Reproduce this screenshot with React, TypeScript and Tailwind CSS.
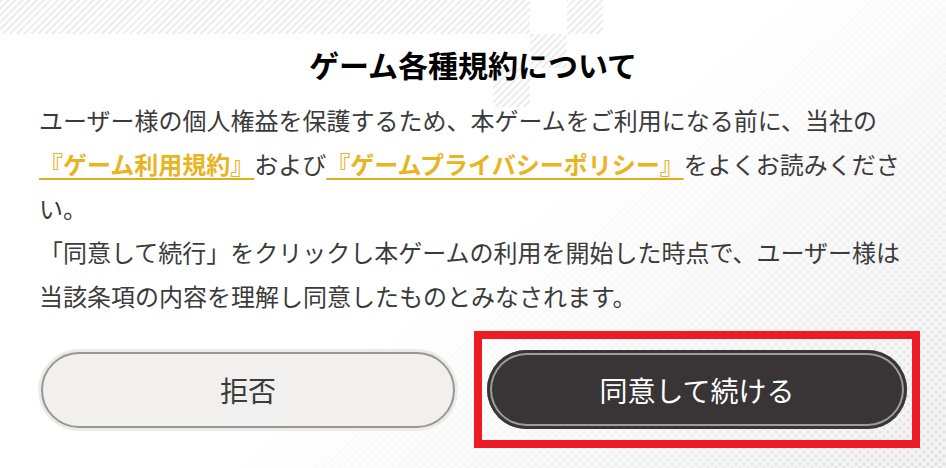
import React from "react";

function StripeDecor() {
  return (
    <svg
      className="absolute left-0 top-0 pointer-events-none"
      width="946"
      height="110"
      viewBox="0 0 946 110"
    >
      <defs>
        <pattern
          id="stripes"
          width="5"
          height="5"
          patternUnits="userSpaceOnUse"
          patternTransform="rotate(45)"
        >
          <rect x="0" y="0" width="2" height="5" fill="#ececec" />
        </pattern>
      </defs>
      <rect x="0" y="0" width="530" height="34" fill="url(#stripes)" />
      <rect x="567" y="0" width="36" height="34" fill="url(#stripes)" />
      <rect x="530" y="34" width="37" height="34" fill="url(#stripes)" />
      <rect x="493" y="68" width="37" height="39" fill="url(#stripes)" />
    </svg>
  );
}

function TermLink({ children }: { children: React.ReactNode }) {
  return (
    <a className="font-bold text-[#e9b41f] underline decoration-[1.5px] underline-offset-[4px] decoration-[#e2ad1a]">
      {children}
    </a>
  );
}

export default function App() {
  return (
    <div className="relative w-[946px] h-[468px] overflow-hidden bg-[#f3f3f3] [background-image:linear-gradient(140deg,#ffffff_52%,rgba(255,255,255,0.1)_100%),radial-gradient(circle,#e0e0e0_1.7px,transparent_2.3px),radial-gradient(circle,#e0e0e0_1.7px,transparent_2.3px)] [background-size:100%_100%,8px_8px,8px_8px] [background-position:0_0,0_0,4px_4px] font-['Noto_Sans_CJK_JP','Noto_Sans',sans-serif]">
      <StripeDecor />
      <div className="relative flex flex-col pt-[44px]">
        <h1 className="text-center text-[30px] leading-[40px] font-bold text-black">
          ゲーム各種規約について
        </h1>
        <p className="mt-[14px] pl-[39px] w-[909px] text-[24px] leading-[44px] text-[#3b3b3b]">
          ユーザー様の個人権益を保護するため、本ゲームをご利用になる前に、当社の
          <TermLink>『ゲーム利用規約』</TermLink>
          および
          <TermLink>『ゲームプライバシーポリシー』</TermLink>
          をよくお読みください。
          <br />
          「同意して続行」をクリックし本ゲームの利用を開始した時点で、ユーザー様は当該条項の内容を理解し同意したものとみなされます。
        </p>
        <div className="mt-[13px] flex items-center pl-[41px] gap-[19px]">
          <button className="w-[414px] h-[76px] rounded-full border-2 border-[#9a9597] bg-[#f1f0ef] shadow-[0_0_0_3px_#ecebea] text-[28px] text-[#3b3b3b]">
            拒否
          </button>
          <div className="border-8 border-[#ed1c24] px-[5px] py-[11px]">
            <button className="w-[420px] h-[79px] rounded-full bg-[#393435] shadow-[inset_0_0_0_3px_#393435,inset_0_0_0_5px_#9f9c9c] text-[28px] text-white">
              同意して続ける
            </button>
          </div>
        </div>
      </div>
    </div>
  );
}
